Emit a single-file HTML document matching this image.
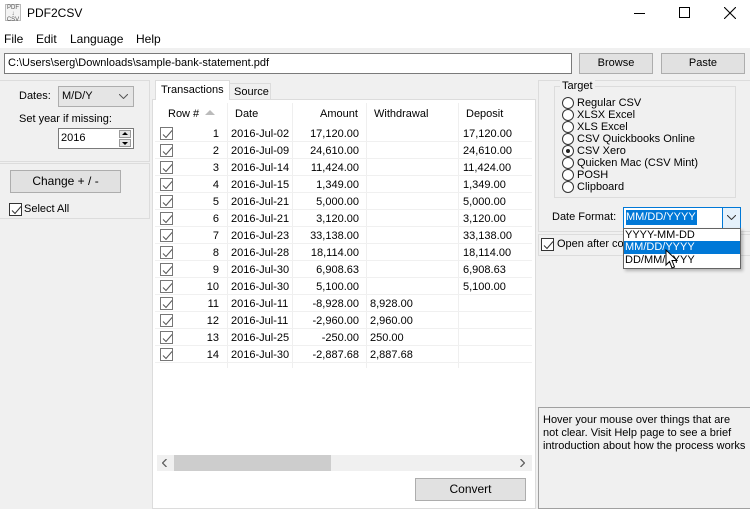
<!DOCTYPE html>
<html><head><meta charset="utf-8"><style>
*{margin:0;padding:0;box-sizing:border-box}
body{width:750px;height:507px;overflow:hidden;background:#f0f0f0;font-family:"Liberation Sans",sans-serif;font-size:11px;color:#000;position:relative}
.a{position:absolute;white-space:nowrap}
.btn{position:absolute;background:#e1e1e1;border:1px solid #adadad;text-align:center}
.fr{position:absolute;border:1px solid #dcdcdc}
.cb{position:absolute;width:13px;height:13px;border:1px solid #333;background:#fff}
.cb svg{position:absolute;left:1px;top:1px}
.tc{position:absolute;width:13px;height:13px;border:1px solid #777;background:#fff}
.tc svg{position:absolute;left:1px;top:1px}
.rd{position:absolute;width:12px;height:12px;border:1px solid #333;border-radius:50%;background:#fff}
.r{text-align:right}
</style></head><body>
<div class="a" style="left:0;top:0;width:750px;height:48px;background:#fff"></div>
<div class="a" style="left:5px;top:4px;width:16px;height:17px;font-size:6px;line-height:6px;color:#555;border:1px solid #bbb;text-align:center;background:#f4f4f4">PDF<br>↓<br>CSV</div>
<div class="a" style="left:27px;top:6px;font-size:12px">PDF2CSV</div>
<div class="a" style="left:634px;top:13px;width:11px;height:1px;background:#000"></div>
<div class="a" style="left:679px;top:7px;width:11px;height:11px;border:1px solid #000"></div>
<svg class="a" style="left:724px;top:7px" width="12" height="12"><path d="M0 0L12 12M12 0L0 12" stroke="#000" stroke-width="1.1"/></svg>
<div class="a" style="left:4px;top:32px;font-size:12px">File</div>
<div class="a" style="left:36px;top:32px;font-size:12px">Edit</div>
<div class="a" style="left:70px;top:32px;font-size:12px">Language</div>
<div class="a" style="left:136px;top:32px;font-size:12px">Help</div>

<div class="a" style="left:4px;top:53px;width:568px;height:21px;background:#fff;border:1px solid #7a7a7a;padding:3px 3px">C:\Users\serg\Downloads\sample-bank-statement.pdf</div>
<div class="btn" style="left:579px;top:53px;width:74px;height:21px;line-height:19px">Browse</div>
<div class="btn" style="left:661px;top:53px;width:84px;height:21px;line-height:19px">Paste</div>

<div class="fr" style="left:-1px;top:80px;width:151px;height:82px"></div>
<div class="fr" style="left:-1px;top:163px;width:151px;height:56px"></div>
<div class="a" style="left:19px;top:90px">Dates:</div>
<div class="a" style="left:58px;top:86px;width:76px;height:21px;background:#e5e5e5;border:1px solid #adadad;padding:3px 3px">M/D/Y</div>
<svg class="a" style="left:119px;top:94px" width="9" height="5"><path d="M0 0L4.5 4.5L9 0" fill="none" stroke="#555"/></svg>
<div class="a" style="left:19px;top:113px">Set year if missing:</div>
<div class="a" style="left:58px;top:128px;width:76px;height:21px;background:#fff;border:1px solid #7a7a7a;padding:3px 2px">2016</div>
<div class="a" style="left:119px;top:130px;width:12px;height:8px;background:#e5e5e5;border:1px solid #999"></div>
<div class="a" style="left:119px;top:139px;width:12px;height:8px;background:#e5e5e5;border:1px solid #999"></div>
<svg class="a" style="left:122px;top:132px" width="6" height="13"><path d="M0 3L3 0L6 3Z M0 10L3 13L6 10Z" fill="#000"/></svg>
<div class="btn" style="left:10px;top:170px;width:111px;height:23px;line-height:21px;font-size:12px">Change + / -</div>
<div class="cb" style="left:9px;top:203px"><svg width="11" height="11"><path d="M1 5.5L4 8.5L10 1.5" fill="none" stroke="#333"/></svg></div>
<div class="a" style="left:24px;top:203px">Select All</div>

<div class="a" style="left:152px;top:99px;width:384px;height:410px;border:1px solid #dcdcdc;background:#fff"></div>
<div class="a" style="left:229px;top:83px;width:42px;height:17px;border:1px solid #dcdcdc;background:#f0f0f0;padding:2px 4px">Source</div>
<div class="a" style="left:155px;top:80px;width:75px;height:20px;border:1px solid #dcdcdc;border-bottom:none;background:#fff;padding:3px 5px">Transactions</div>
<div class="a" style="left:153px;top:472px;width:382px;height:36px;background:#fff"></div>
<div class="btn" style="left:415px;top:478px;width:111px;height:23px;line-height:21px;font-size:12px">Convert</div>

<div class="a" style="left:155px;top:100px;width:377px;height:355px;background:#fff;overflow:hidden">
 <div class="a" style="left:13px;top:8px">Row #</div>
 <svg class="a" style="left:50px;top:10px" width="10" height="5"><path d="M0 5L5 0L10 5Z" fill="#bbb"/></svg>
 <div class="a" style="left:80px;top:8px">Date</div>
 <div class="a" style="left:165px;top:8px">Amount</div>
 <div class="a" style="left:219px;top:8px">Withdrawal</div>
 <div class="a" style="left:311px;top:8px">Deposit</div>
 <div class="a" style="left:72px;top:3px;width:1px;height:265px;background:#efefef"></div>
 <div class="a" style="left:137px;top:3px;width:1px;height:265px;background:#efefef"></div>
 <div class="a" style="left:211px;top:3px;width:1px;height:265px;background:#efefef"></div>
 <div class="a" style="left:303px;top:3px;width:1px;height:265px;background:#efefef"></div>
 <div id="rows"></div>
</div>
<div class="a" style="left:157px;top:455px;width:375px;height:16px;background:#f0f0f0"></div>
<div class="a" style="left:174px;top:455px;width:157px;height:16px;background:#cdcdcd"></div>
<svg class="a" style="left:162px;top:459px" width="5" height="8"><path d="M4.5 0L0.5 4L4.5 8" fill="none" stroke="#606060" stroke-width="1.3"/></svg>
<svg class="a" style="left:520px;top:459px" width="5" height="8"><path d="M0.5 0L4.5 4L0.5 8" fill="none" stroke="#606060" stroke-width="1.3"/></svg>

<div class="fr" style="left:538px;top:80px;width:214px;height:152px"></div>
<div class="fr" style="left:554px;top:86px;width:182px;height:112px"></div>
<div class="a" style="left:560px;top:80px;background:#f0f0f0;padding:0 2px">Target</div>
<div class="rd" style="left:562px;top:97px"></div><div class="a" style="left:577px;top:97px">Regular CSV</div>
<div class="rd" style="left:562px;top:109px"></div><div class="a" style="left:577px;top:109px">XLSX Excel</div>
<div class="rd" style="left:562px;top:121px"></div><div class="a" style="left:577px;top:121px">XLS Excel</div>
<div class="rd" style="left:562px;top:133px"></div><div class="a" style="left:577px;top:133px">CSV Quickbooks Online</div>
<div class="rd" style="left:562px;top:145px"><div class="a" style="left:3px;top:3px;width:4px;height:4px;border-radius:50%;background:#222"></div></div><div class="a" style="left:577px;top:145px">CSV Xero</div>
<div class="rd" style="left:562px;top:157px"></div><div class="a" style="left:577px;top:157px">Quicken Mac (CSV Mint)</div>
<div class="rd" style="left:562px;top:169px"></div><div class="a" style="left:577px;top:169px">POSH</div>
<div class="rd" style="left:562px;top:181px"></div><div class="a" style="left:577px;top:181px">Clipboard</div>
<div class="a" style="left:552px;top:211px">Date Format:</div>
<div class="fr" style="left:538px;top:234px;width:214px;height:22px"></div>
<div class="cb" style="left:541px;top:238px"><svg width="11" height="11"><path d="M1 5.5L4 8.5L10 1.5" fill="none" stroke="#333"/></svg></div>
<div class="a" style="left:557px;top:238px">Open after co</div>
<div class="a" style="left:623px;top:207px;width:118px;height:22px;background:#fff;border:1px solid #0078d7"></div>
<div class="a" style="left:626px;top:210px;height:15px;background:#0078d7;color:#fff;padding:1px 1px 0 0">MM/DD/YYYY</div>
<div class="a" style="left:722px;top:208px;width:18px;height:20px;border-left:1px solid #0078d7;background:#e5f1fb"></div>
<svg class="a" style="left:727px;top:215px" width="9" height="5"><path d="M0 0L4.5 4.5L9 0" fill="none" stroke="#333"/></svg>
<div class="a" style="left:623px;top:228px;width:118px;height:41px;background:#fff;border:1px solid #646464;box-shadow:2px 2px 3px rgba(0,0,0,.25)"></div>
<div class="a" style="left:625px;top:229px">YYYY-MM-DD</div>
<div class="a" style="left:624px;top:241px;width:116px;height:13px;background:#0078d7"></div>
<div class="a" style="left:625px;top:241px;color:#fff">MM/DD/YYYY</div>
<div class="a" style="left:625px;top:254px">DD/MM/YYYY</div>
<svg class="a" style="left:665px;top:249px" width="13" height="21"><path d="M1 1L1 16L4.5 12.5L7 19L9.5 18L7 11.5L12 11.5Z" fill="#fff" stroke="#000"/></svg>
<div class="a" style="left:538px;top:407px;width:214px;height:102px;border:1px solid #a0a0a0"></div>
<div class="a" style="left:543px;top:414px;line-height:13px">Hover your mouse over things that are<br>not clear. Visit Help page to see a brief<br>introduction about how the process works</div>
<script>
var d=[["1","2016-Jul-02","17,120.00","","17,120.00"],["2","2016-Jul-09","24,610.00","","24,610.00"],["3","2016-Jul-14","11,424.00","","11,424.00"],["4","2016-Jul-15","1,349.00","","1,349.00"],["5","2016-Jul-21","5,000.00","","5,000.00"],["6","2016-Jul-21","3,120.00","","3,120.00"],["7","2016-Jul-23","33,138.00","","33,138.00"],["8","2016-Jul-28","18,114.00","","18,114.00"],["9","2016-Jul-30","6,908.63","","6,908.63"],["10","2016-Jul-30","5,100.00","","5,100.00"],["11","2016-Jul-11","-8,928.00","8,928.00",""],["12","2016-Jul-11","-2,960.00","2,960.00",""],["13","2016-Jul-25","-250.00","250.00",""],["14","2016-Jul-30","-2,887.68","2,887.68",""]];
var h="";d.forEach(function(r,i){var t=25+17*i;
h+='<div class="a" style="left:0;top:'+(t+16)+'px;width:377px;height:1px;background:#f0f0f0"></div>';
h+='<div class="tc" style="left:5px;top:'+(t+2)+'px"><svg width="11" height="11"><path d="M1 5.5L4 8.5L10 1.5" fill="none" stroke="#555"/></svg></div>';
h+='<div class="a r" style="left:30px;width:34px;top:'+(t+3)+'px">'+r[0]+'</div>';
h+='<div class="a" style="left:76px;top:'+(t+3)+'px">'+r[1]+'</div>';
h+='<div class="a r" style="left:140px;width:64px;top:'+(t+3)+'px">'+r[2]+'</div>';
h+='<div class="a" style="left:215px;top:'+(t+3)+'px">'+r[3]+'</div>';
h+='<div class="a" style="left:308px;top:'+(t+3)+'px">'+r[4]+'</div>';});
document.getElementById("rows").innerHTML=h;
</script>
</body></html>
